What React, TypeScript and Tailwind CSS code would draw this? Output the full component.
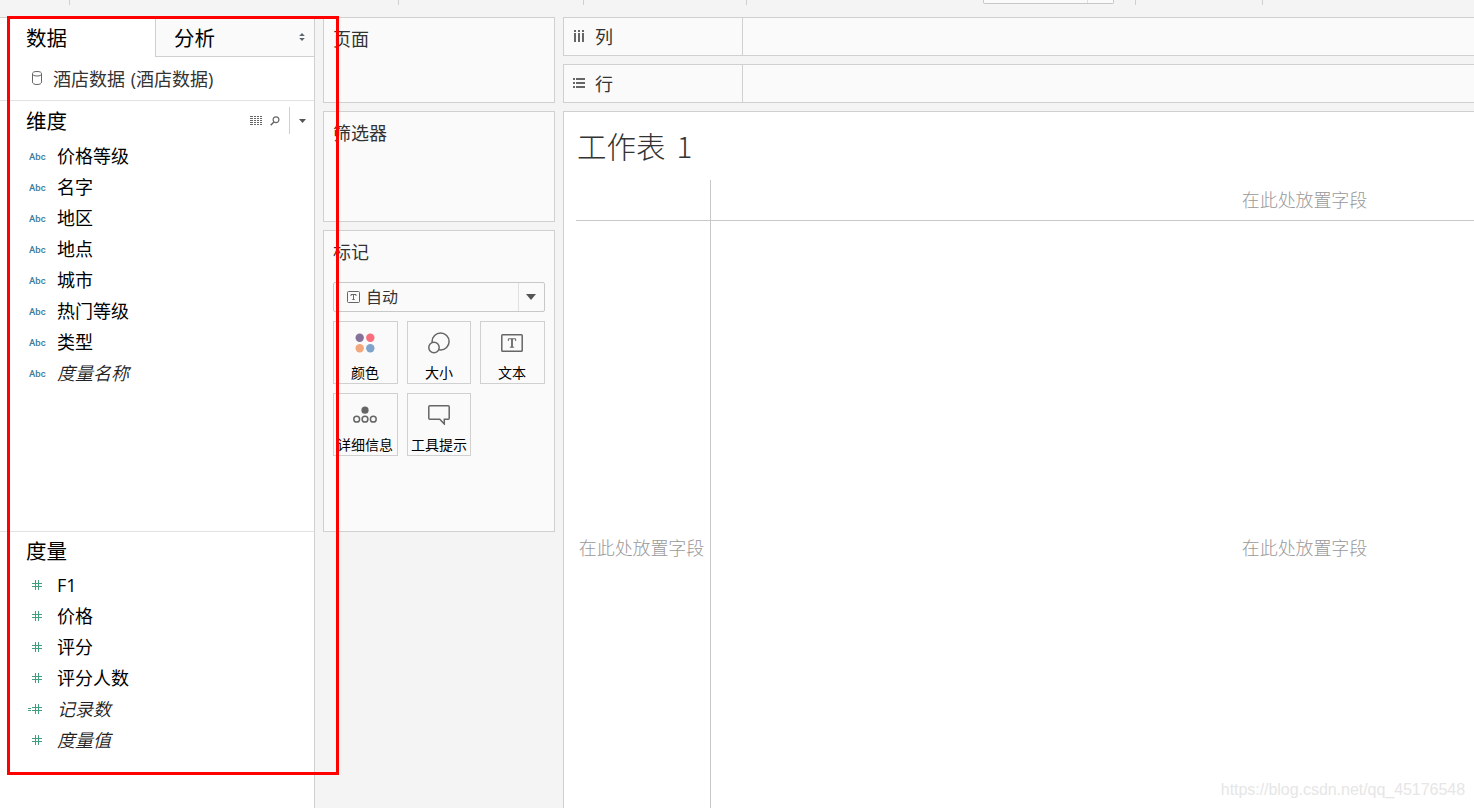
import React from "react";
import clsx from "clsx";

type Field = { name: string; italic?: boolean; calculated?: boolean };

const dimensions: Field[] = [
  { name: "价格等级" },
  { name: "名字" },
  { name: "地区" },
  { name: "地点" },
  { name: "城市" },
  { name: "热门等级" },
  { name: "类型" },
  { name: "度量名称", italic: true },
];

const measures: Field[] = [
  { name: "F1" },
  { name: "价格" },
  { name: "评分" },
  { name: "评分人数" },
  { name: "记录数", italic: true, calculated: true },
  { name: "度量值", italic: true },
];

const DatabaseIcon = () => (
  <svg width="12" height="16" viewBox="0 0 12 16" fill="none" stroke="#666" className="-mt-px">
    <path d="M1.5 3.6C1.5 2.3 3 1.5 6 1.5s4.500 .8 4.500 2.100v8.300c0 1.700-1.500 2.600-4.500 2.600s-4.500-.9-4.500-2.600zM1.500 3.800C1.500 5.200 3 6 6 6s4.500-.8 4.500-2.200" />
  </svg>
);

const SortIcon = () => (
  <svg width="6" height="8" viewBox="0 0 6 8" fill="#5b6770">
    <path d="M3 0l2.800 3H.2zM3 8l2.800-3H.2z" />
  </svg>
);

const GridListIcon = () => (
  <svg width="13" height="10" viewBox="0 0 13 10" fill="#666" shapeRendering="crispEdges">
    {[0, 2, 4, 6, 8].map((y) => (
      <path key={y} d={`M0 ${y}h3v1h-3zM4 ${y}h2v1h-2zM7 ${y}h2v1h-2zM10 ${y}h2v1h-2z`} />
    ))}
  </svg>
);

const SearchIcon = () => (
  <svg width="10" height="10" viewBox="0 0 10 10" fill="none" stroke="#666">
    <circle cx="6" cy="3.700" r="2.900" strokeWidth="1.200" />
    <path d="M3.900 6L.7 9.200" strokeWidth="1.500" />
  </svg>
);

const CaretIcon = ({ width, height }: { width: number; height: number }) => (
  <svg width={width} height={height} viewBox="0 0 10 6" preserveAspectRatio="none" fill="#555">
    <path d="M0 0h10L5 6z" />
  </svg>
);

const HashIcon = ({ calculated }: { calculated?: boolean }) => (
  <svg width="16" height="12" viewBox="0 0 16 12" fill="#3f9f7f" shapeRendering="crispEdges">
    <path d="M8 1h1v10h-1zM11 1h1v10h-1zM5 4h10v1H5zM5 7h10v1H5z" />
    {calculated && <path d="M1 5h3v1H1zM1 7h3v1H1z" />}
  </svg>
);

const TextMarkIcon = ({ small }: { small?: boolean }) => (
  <svg
    width={small ? 13 : 22}
    height={small ? 12 : 18}
    viewBox={small ? "0 0 13 12" : "0 0 22 18"}
    fill="none"
    stroke="#666"
  >
    {small ? (
      <>
        <rect x="0.500" y="0.500" width="12" height="11" rx="1" />
        <path d="M4 5V3.500h5V5M6.500 3.500v5M5.300 8.500h2.400" />
      </>
    ) : (
      <>
        <rect x="0.800" y="0.800" width="20.400" height="16.400" rx="0.800" strokeWidth="1.500" />
        <path d="M7.300 7V4.800h7.400V7M8.900 13.200h4.200" />
        <path d="M11 4.800v8.400" strokeWidth="1.800" />
      </>
    )}
  </svg>
);

const ColorIcon = () => (
  <svg width="20" height="20" viewBox="0 0 20 20">
    <circle cx="4.700" cy="4.700" r="4.200" fill="#857199" />
    <circle cx="15.300" cy="4.700" r="4.200" fill="#f96d7c" />
    <circle cx="4.700" cy="15.200" r="4.200" fill="#f4a77c" />
    <circle cx="15.300" cy="15.200" r="4.200" fill="#7fa3cb" />
  </svg>
);

const SizeIcon = () => (
  <svg width="22" height="22" viewBox="0 0 22 22" fill="none" stroke="#666" strokeWidth="1.500">
    <circle cx="12.600" cy="9.500" r="8.500" />
    <circle cx="6" cy="15.500" r="5.200" fill="#fafafa" />
  </svg>
);

const DetailIcon = () => (
  <svg width="24" height="18" viewBox="0 0 24 18" fill="none" stroke="#666" strokeWidth="1.500">
    <circle cx="12" cy="4.200" r="3.600" fill="#666" stroke="none" />
    <circle cx="3.700" cy="13.200" r="2.900" />
    <circle cx="12" cy="13.200" r="2.900" />
    <circle cx="20.300" cy="13.200" r="2.900" />
  </svg>
);

const TooltipIcon = () => (
  <svg width="22" height="20" viewBox="0 0 22 20" fill="none" stroke="#666" strokeWidth="1.500">
    <path d="M1.800 .8h18.400q1 0 1 1v11.400q0 1-1 1h-3.900v4.800l-4.500-4.800h-10q-1 0-1-1V1.800q0-1 1-1z" />
  </svg>
);

const ColumnsIcon = () => (
  <svg width="13" height="12" viewBox="0 0 13 12" fill="#666" shapeRendering="crispEdges">
    <path d="M1 0h2v2H1zM5 0h2v2H5zM9 0h2v2H9zM1 3h2v9H1zM5 3h2v9H5zM9 3h2v9H9z" />
  </svg>
);

const RowsIcon = () => (
  <svg width="13" height="12" viewBox="0 0 13 12" fill="#666" shapeRendering="crispEdges">
    <path d="M0 1h2v2H0zM0 5h2v2H0zM0 9h2v2H0zM3 1h9v2H3zM3 5h9v2H3zM3 9h9v2H3z" />
  </svg>
);

const FieldRow = ({ field, kind }: { field: Field; kind: "dimension" | "measure" }) => (
  <li className="flex h-[31px] items-center">
    <span className="flex w-[57px] shrink-0 items-center pl-7">
      {kind === "dimension" ? (
        <span className="pt-[3px] pl-px font-[Roboto] text-[9.5px] leading-3 font-medium text-[#3a7d9c]">Abc</span>
      ) : (
        <span className="-ml-px">
          <HashIcon calculated={field.calculated} />
        </span>
      )}
    </span>
    <span className={clsx("text-lg leading-6", field.italic && "font-[350] text-[#222] italic")}>
      {field.name}
    </span>
  </li>
);

const DataPane = () => (
  <aside className="flex w-[315px] shrink-0 flex-col border-t border-r border-[#d0d0d0] bg-white text-black">
    <div className="flex h-[39px] shrink-0 text-[20.500px]">
      <div className="flex w-[155px] items-center pt-px pl-[26px]">数据</div>
      <div className="flex grow items-center justify-between border-b border-l border-[#d0d0d0] bg-[#fafafa] pt-[3px] pr-[9px] pl-[18px]">
        分析
        <span className="-mt-[3px]">
          <SortIcon />
        </span>
      </div>
    </div>
    <div className="flex h-11 shrink-0 items-center gap-[10px] border-b border-[#e2e2e2] pl-[31px] text-lg text-[#333]">
      <DatabaseIcon />
      <span>
        酒店数据<span className="ml-px"> (</span>酒店数据)
      </span>
    </div>
    <section className="flex h-[431px] shrink-0 flex-col border-b border-[#e2e2e2]">
      <div className="flex h-[39px] items-center pl-[26px] text-[20.500px]">
        <span className="grow pt-[2px]">维度</span>
        <GridListIcon />
        <span className="ml-[7px]">
          <SearchIcon />
        </span>
        <span className="ml-[9px] flex h-[27px] w-[25px] items-center justify-center border-l border-[#d0d0d0]">
          <CaretIcon width={7} height={4} />
        </span>
      </div>
      <ul>
        {dimensions.map((f) => (
          <FieldRow key={f.name} field={f} kind="dimension" />
        ))}
      </ul>
    </section>
    <section>
      <div className="flex h-[37px] items-center pt-px pl-[26px] text-[20.500px]">度量</div>
      <ul>
        {measures.map((f) => (
          <FieldRow key={f.name} field={f} kind="measure" />
        ))}
      </ul>
    </section>
  </aside>
);

const Card = ({
  title,
  className,
  children,
}: {
  title: string;
  className: string;
  children?: React.ReactNode;
}) => (
  <section className={clsx("border border-[#d0d0d0] bg-[#fafafa] px-[9px]", className)}>
    <h3 className="pt-2 pb-px text-lg leading-[26px] text-[#333]">{title}</h3>
    {children}
  </section>
);

const MarkButton = ({
  label,
  wide,
  children,
}: {
  label: string;
  wide?: boolean;
  children: React.ReactNode;
}) => (
  <button
    className={clsx(
      "flex h-[63px] flex-col items-center border border-[#d0d0d0] bg-[#fafafa] text-black",
      wide && "pr-px"
    )}
  >
    <span className="flex h-[42px] shrink-0 items-center">{children}</span>
    <span className="text-sm leading-[18px] whitespace-nowrap">{label}</span>
  </button>
);

const Cards = () => (
  <div className="ml-2 flex w-[232px] shrink-0 flex-col gap-2">
    <Card title="页面" className="h-[86px]" />
    <Card title="筛选器" className="h-[111px]" />
    <Card title="标记" className="h-[302px]">
      <div className="mt-4 flex h-[30px] items-center rounded-xs border border-[#c8c8c8] pl-[13px] text-base text-[#333]">
        <TextMarkIcon small />
        <span className="grow pl-[6px]">自动</span>
        <span className="flex h-full w-[26px] items-center justify-center border-l border-[#e0e0e0] pr-px">
          <CaretIcon width={10} height={6} />
        </span>
      </div>
      <div className="mt-[9px] grid grid-cols-[65px_64px_65px] gap-[9px]">
        <MarkButton label="颜色" wide>
          <ColorIcon />
        </MarkButton>
        <MarkButton label="大小">
          <SizeIcon />
        </MarkButton>
        <MarkButton label="文本" wide>
          <TextMarkIcon />
        </MarkButton>
        <MarkButton label="详细信息" wide>
          <DetailIcon />
        </MarkButton>
        <MarkButton label="工具提示">
          <TooltipIcon />
        </MarkButton>
      </div>
    </Card>
  </div>
);

const Shelf = ({ label, icon }: { label: string; icon: React.ReactNode }) => (
  <div className="flex h-[39px] shrink-0 border-y border-l border-[#d0d0d0] bg-[#fafafa]">
    <div className="flex w-[179px] items-center gap-[9px] border-r border-[#d0d0d0] pl-[9px] text-lg text-[#333]">
      <span className="-mt-px">{icon}</span>
      <span className="pt-px">{label}</span>
    </div>
  </div>
);

const DropHint = () => (
  <span className="text-lg leading-6 font-light tracking-[-0.1px] whitespace-nowrap text-[#999]">
    在此处放置字段
  </span>
);

const Sheet = () => (
  <div className="flex grow flex-col border-t border-l border-[#d0d0d0] bg-white pl-3">
    <h1 className="flex h-[68px] items-center gap-[9px] pb-[2px] pl-px font-['Noto_Sans_CJK_SC',sans-serif] text-[29.5px] font-light text-[#333]">
      <span>工作表</span>
      <span className="pl-[2px]">1</span>
    </h1>
    <div className="grid grow grid-cols-[135px_1fr] grid-rows-[41px_1fr]">
      <div className="border-r border-b border-[#c8c8c8]" />
      <div className="flex items-center justify-center border-b border-[#c8c8c8] pl-[424px]">
        <DropHint />
      </div>
      <div className="flex justify-center border-r border-[#c8c8c8] pt-[315px] pr-[3px]">
        <DropHint />
      </div>
      <div className="flex justify-center pt-[315px] pl-[424px]">
        <DropHint />
      </div>
    </div>
  </div>
);

// Lower edge of the toolbar: separators and the fit selector
const ToolbarEdge = () => (
  <div className="flex h-[17px] shrink-0 items-start">
    <div className="ml-[69px] h-[5px] w-px bg-[#d0d0d0]" />
    <div className="ml-[328px] h-[5px] w-px bg-[#d0d0d0]" />
    <div className="ml-[184px] h-[5px] w-px bg-[#d0d0d0]" />
    <div className="ml-[162px] h-[5px] w-px bg-[#d0d0d0]" />
    <div className="ml-[236px] flex h-1 w-[131px] justify-end rounded-b-xs border-x border-b border-[#c8c8c8] bg-[#fafafa]">
      <div className="w-[26px] border-l border-[#e0e0e0]" />
    </div>
    <div className="ml-[21px] h-[5px] w-px bg-[#d0d0d0]" />
    <div className="ml-[126px] h-[5px] w-px bg-[#d0d0d0]" />
  </div>
);

export default function App() {
  return (
    <div className="relative flex h-[808px] w-[1474px] flex-col overflow-hidden bg-[#f4f4f4] font-['Open_Sans','Noto_Sans_CJK_SC',sans-serif]">
      <ToolbarEdge />
      <main className="flex grow">
        <DataPane />
        <Cards />
        <div className="ml-2 flex grow flex-col gap-2">
          <Shelf label="列" icon={<ColumnsIcon />} />
          <Shelf label="行" icon={<RowsIcon />} />
          <Sheet />
        </div>
      </main>
      <div className="pointer-events-none absolute top-4 left-[7px] h-[759px] w-[332px] border-3 border-[#ff0000]" />
      <div className="absolute right-[9px] bottom-[6px] font-['Liberation_Sans',sans-serif] text-base leading-6 tracking-[-0.04px] text-[#e6e6e6]">
        https://blog.csdn.net/qq_45176548
      </div>
    </div>
  );
}
